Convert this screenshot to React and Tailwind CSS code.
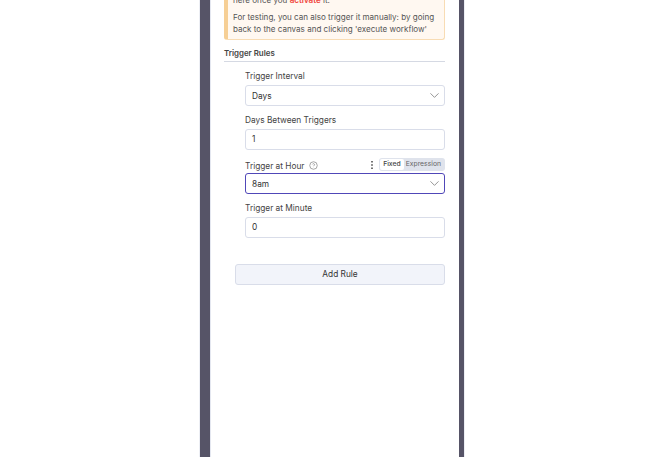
import { ChevronDown } from 'lucide-react';

function Label({ children }) {
  return <div className="pt-[2px] text-[8.3px] leading-[14px] text-[#444]">{children}</div>;
}

function SelectBox({ value, focused }) {
  return (
    <div
      className={`flex h-[21px] items-center justify-between rounded-[3px] bg-white pl-[6px] pr-[2px] text-[8.3px] text-[#333] border ${
        focused ? 'border-[#5047b8]' : 'border-[#d9dde9]'
      }`}
    >
      <span className="pt-[1px]">{value}</span>
      <ChevronDown size={15} strokeWidth={1.25} className="text-[#777]" />
    </div>
  );
}

function TextBox({ value }) {
  return (
    <div className="flex h-[21px] items-center rounded-[3px] border border-[#d9dde9] bg-white pl-[6px] text-[8.3px] text-[#333]">
      {value}
    </div>
  );
}

export default function App() {
  return (
    <div className="h-[457px] w-[664px] overflow-hidden bg-white pl-[199px] font-['Inter','Liberation_Sans',sans-serif]">
      <div className="h-full w-[266px] border-x border-[#eceef4]">
        <div className="h-full border-l-[10px] border-r-[5px] border-[#565467]">
          <div className="h-full overflow-hidden border-l border-[#e4e7f0] bg-white pl-[13px] pr-[14px]">
            {/* Notice, scrolled partly out of view */}
            <div className="-mt-[6px] rounded-b-[3px] border border-t-0 border-[#f8dcb4] border-l-[4px] border-l-[#f6cf95] bg-[#fff8f1] pb-[4px] pl-[5px] text-[8.05px] leading-[12px] text-[#555]">
              <p className="whitespace-nowrap">
                here once you <b className="font-semibold text-[#f0433a]">activate</b> it.
              </p>
              <p className="mt-[5px] whitespace-nowrap">For testing, you can also trigger it manually: by going</p>
              <p className="whitespace-nowrap">back to the canvas and clicking 'execute workflow'</p>
            </div>

            <div className="mt-[6px] border-b border-[#d5d9e3] pb-[1px] text-[7.9px] font-semibold leading-[14px] text-[#444]">
              Trigger Rules
            </div>

            <div className="ml-[21px] mt-[5px]">
              <Label>Trigger Interval</Label>
              <div className="mt-[2px]">
                <SelectBox value="Days" />
              </div>

              <div className="mt-[5px]">
                <Label>Days Between Triggers</Label>
              </div>
              <div className="mt-[2px]">
                <TextBox value="1" />
              </div>

              <div className="mt-[7px] flex h-[15px] items-center justify-between">
                <div className="flex items-center gap-[4px]">
                  <Label>Trigger at Hour</Label>
                  <svg width="9" height="9" viewBox="0 0 24 24" fill="none" stroke="#888" strokeWidth="2" className="mt-[1px]">
                    <circle cx="12" cy="12" r="10" />
                    <path d="M9 9a3 3 0 0 1 5.8 1c0 2-2.8 2.5-2.8 4" />
                    <path d="M12 17.5v.5" />
                  </svg>
                </div>
                <div className="flex items-center">
                  <svg width="2" height="8" viewBox="0 0 2 8" fill="#444" className="mr-[6px]">
                    <rect x="0.25" y="0" width="1.5" height="1.5" />
                    <rect x="0.25" y="3.25" width="1.5" height="1.5" />
                    <rect x="0.25" y="6.5" width="1.5" height="1.5" />
                  </svg>
                  <div className="flex h-[13px] items-center rounded-[3px] bg-[#dfe3ec] pl-[1px] pr-[4px] text-[6.8px] leading-none text-[#666]">
                    <span className="flex h-[11px] items-center rounded-[2px] bg-white px-[3px] font-medium text-[#444]">Fixed</span>
                    <span className="pl-[2px]">Expression</span>
                  </div>
                </div>
              </div>
              <div className="mt-[1px]">
                <SelectBox value="8am" focused />
              </div>

              <div className="mt-[5px]">
                <Label>Trigger at Minute</Label>
              </div>
              <div className="mt-[2px]">
                <TextBox value="0" />
              </div>
            </div>

            <button className="ml-[11px] mt-[26px] h-[21px] w-[210px] rounded-[3px] border border-[#d9dde9] bg-[#f2f4fa] text-[8.3px] leading-none text-[#333]">
              Add Rule
            </button>
          </div>
        </div>
      </div>
    </div>
  );
}
